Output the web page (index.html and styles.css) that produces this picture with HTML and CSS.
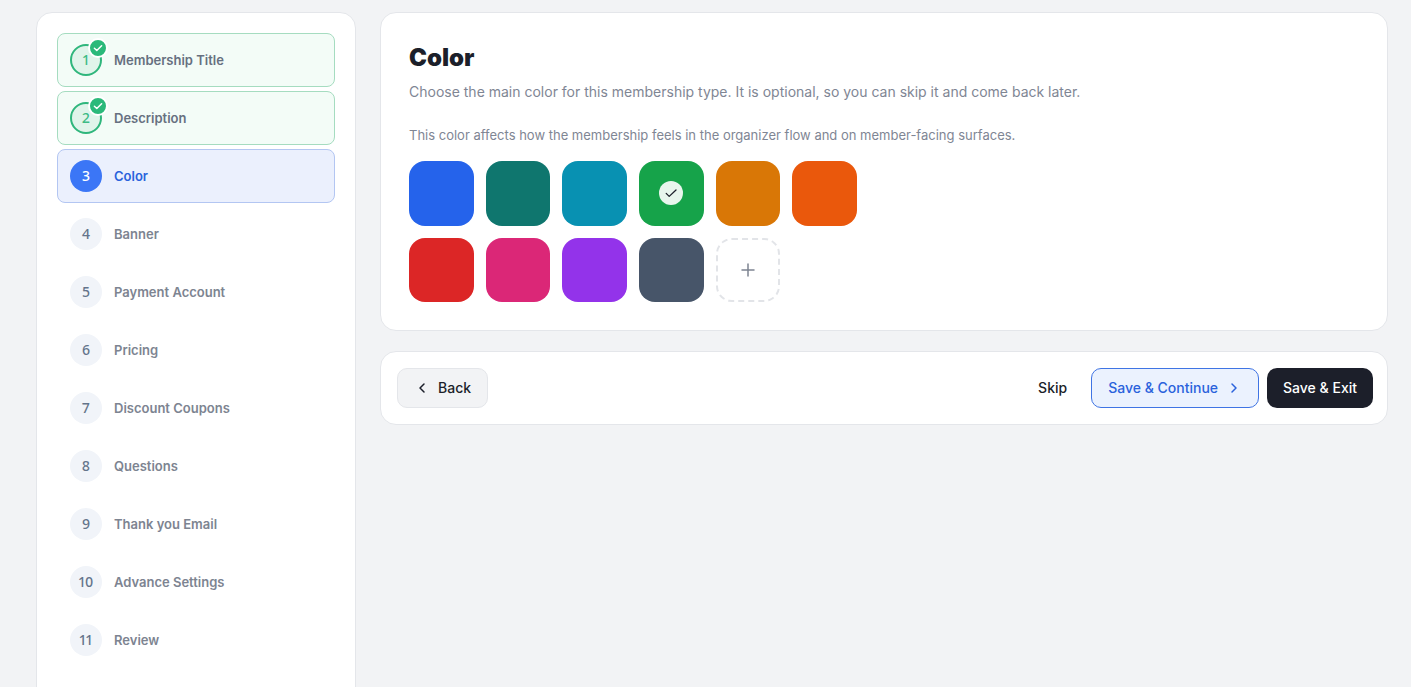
FILE: index.html
```html
<!DOCTYPE html>
<html lang="en">
<head>
  <meta charset="UTF-8">
  <meta name="viewport" content="width=device-width, initial-scale=1.0">
  <title>Membership Color</title>
  <link rel="stylesheet" href="styles.css">
</head>
<body>
  <div class="layout">
    <nav class="sidebar" aria-label="Steps">
      <ol class="steps">
        <li><a href="#title" class="step done">
          <span class="step-number">1
            <svg class="step-check" viewBox="0 0 20 20"><circle cx="10" cy="10" r="9"/><path d="M6.4 10.3l2.4 2.2 4.8-4.8"/></svg>
          </span>
          <span class="step-label">Membership Title</span>
        </a></li>
        <li><a href="#description" class="step done">
          <span class="step-number">2
            <svg class="step-check" viewBox="0 0 20 20"><circle cx="10" cy="10" r="9"/><path d="M6.4 10.3l2.4 2.2 4.8-4.8"/></svg>
          </span>
          <span class="step-label">Description</span>
        </a></li>
        <li><a href="#color" class="step current" aria-current="step"><span class="step-number">3</span><span class="step-label">Color</span></a></li>
        <li><a href="#banner" class="step"><span class="step-number">4</span><span class="step-label">Banner</span></a></li>
        <li><a href="#payment" class="step"><span class="step-number">5</span><span class="step-label">Payment Account</span></a></li>
        <li><a href="#pricing" class="step"><span class="step-number">6</span><span class="step-label">Pricing</span></a></li>
        <li><a href="#coupons" class="step"><span class="step-number">7</span><span class="step-label">Discount Coupons</span></a></li>
        <li><a href="#questions" class="step"><span class="step-number">8</span><span class="step-label">Questions</span></a></li>
        <li><a href="#email" class="step"><span class="step-number">9</span><span class="step-label">Thank you Email</span></a></li>
        <li><a href="#settings" class="step"><span class="step-number">10</span><span class="step-label">Advance Settings</span></a></li>
        <li><a href="#review" class="step"><span class="step-number">11</span><span class="step-label">Review</span></a></li>
      </ol>
    </nav>

    <main class="content">
      <section class="card color-card">
        <h1>Color</h1>
        <p class="lead">Choose the main color for this membership type. It is optional, so you can skip it and come back later.</p>
        <p class="hint">This color affects how the membership feels in the organizer flow and on member-facing surfaces.</p>
        <div class="swatches">
          <button type="button" class="swatch blue" aria-label="Blue"></button>
          <button type="button" class="swatch teal" aria-label="Teal"></button>
          <button type="button" class="swatch cyan" aria-label="Cyan"></button>
          <button type="button" class="swatch green" aria-label="Green" aria-pressed="true">
            <span class="selected">
              <svg viewBox="0 0 16 16" width="16" height="16"><path d="M3.2 8.4l3 3 6.8-6.4"/></svg>
            </span>
          </button>
          <button type="button" class="swatch amber" aria-label="Amber"></button>
          <button type="button" class="swatch orange" aria-label="Orange"></button>
          <button type="button" class="swatch red" aria-label="Red"></button>
          <button type="button" class="swatch pink" aria-label="Pink"></button>
          <button type="button" class="swatch purple" aria-label="Purple"></button>
          <button type="button" class="swatch slate" aria-label="Slate"></button>
          <button type="button" class="swatch custom" aria-label="Custom color">
            <svg viewBox="0 0 20 20" width="20" height="20"><path d="M10 4v12M4 10h12"/></svg>
          </button>
        </div>
      </section>

      <div class="card actions">
        <button type="button" class="btn btn-back">
          <svg viewBox="0 0 16 16" width="16" height="16"><path d="M10 4L6 8l4 4"/></svg>
          Back
        </button>
        <div class="actions-right">
          <button type="button" class="btn btn-skip">Skip</button>
          <button type="button" class="btn btn-continue">
            Save &amp; Continue
            <svg viewBox="0 0 16 16" width="16" height="16"><path d="M6 4l4 4-4 4"/></svg>
          </button>
          <button type="button" class="btn btn-exit">Save &amp; Exit</button>
        </div>
      </div>
    </main>
  </div>
</body>
</html>
```
FILE: styles.css
```css
* {
  margin: 0;
  padding: 0;
  box-sizing: border-box;
}
body {
  font-family: Inter, "Liberation Sans", sans-serif;
  background-color: #f2f3f5;
  color: #1c1f2a;
}
button {
  font: inherit;
  cursor: pointer;
}
svg {
  fill: none;
  stroke: currentColor;
  stroke-linecap: round;
  stroke-linejoin: round;
}
.layout {
  display: flex;
  gap: 24px;
  height: 100vh;
  padding: 12px 23px 0 36px;
  overflow: hidden;
}

/* sidebar */
.sidebar {
  flex: 0 0 320px;
  align-self: flex-start;
  padding: 20px 20px 48px;
  background: #fff;
  border: 1px solid #e4e6ea;
  border-radius: 16px;
}
.steps {
  display: flex;
  flex-direction: column;
  gap: 4px;
  list-style: none;
}
.step {
  display: flex;
  align-items: center;
  gap: 12px;
  height: 54px;
  padding: 0 12px;
  border: 1px solid transparent;
  border-radius: 8px;
  color: #7d8491;
  font-size: 13px;
  line-height: 18px;
  font-weight: 600;
  text-decoration: none;
}
.step-label {
  padding-bottom: 1px;
}
.step-number {
  position: relative;
  display: flex;
  align-items: center;
  justify-content: center;
  width: 32px;
  height: 32px;
  border-radius: 50%;
  background: #f1f4f9;
  color: #64748b;
  font-family: "Noto Sans", sans-serif;
  font-size: 14px;
  font-weight: 500;
  font-variant-numeric: proportional-nums;
}
.step-check {
  position: absolute;
  top: -8px;
  right: -8px;
  width: 20px;
  height: 20px;
  stroke: #fff;
  stroke-width: 2;
}
.step-check circle {
  fill: #2bb97a;
}
.step-check path {
  stroke-width: 1.5;
}
.done {
  background: #f3fcf7;
  border-color: #a5dcc0;
  color: #667080;
}
.done .step-number {
  background: #e0f4ea;
  border: 2px solid #2fb67c;
  color: #3dbb84;
}
.current {
  background: #ebf0fd;
  border-color: #b3c6f2;
  color: #2a62dc;
}
.current .step-number {
  background: #3b76f6;
  color: #fff;
}

/* content */
.content {
  flex: 1;
  min-width: 0;
  display: flex;
  flex-direction: column;
  gap: 20px;
}
.card {
  background: #fff;
  border: 1px solid #e4e6ea;
  border-radius: 16px;
}
.color-card {
  padding: 28px;
}
.color-card h1 {
  font-size: 24px;
  line-height: 34px;
  font-weight: 900;
}
.lead {
  margin-top: 6px;
  font-size: 14px;
  line-height: 22px;
  color: #7f8694;
}
.hint {
  margin: 22px 0 16px;
  font-size: 13px;
  line-height: 20px;
  color: #7f8694;
}
.swatches {
  display: grid;
  grid-template-columns: repeat(6, 1fr);
  gap: 12px;
  max-width: 448px;
}
.swatch {
  display: flex;
  align-items: center;
  justify-content: center;
  aspect-ratio: 1;
  border: none;
  border-radius: 16px;
}
.blue { background: #2563eb; }
.teal { background: #0f766e; }
.cyan { background: #0891b2; }
.green { background: #16a34a; }
.amber { background: #d97706; }
.orange { background: #ea580c; }
.red { background: #dc2626; }
.pink { background: #db2777; }
.purple { background: #9333ea; }
.slate { background: #475569; }
.custom {
  background: #fff;
  border: 2px dashed #e2e4e8;
  color: #7d8491;
}
.custom svg {
  stroke-width: 1.5;
}
.selected {
  display: flex;
  align-items: center;
  justify-content: center;
  width: 24px;
  height: 24px;
  border-radius: 50%;
  background: #e8f6ed;
  color: #1c1f2a;
}
.selected svg {
  stroke-width: 1.3;
}

/* actions */
.actions {
  display: flex;
  align-items: center;
  justify-content: space-between;
  padding: 16px 14px 16px 16px;
}
.actions-right {
  display: flex;
  gap: 8px;
}
.btn {
  display: flex;
  align-items: center;
  gap: 8px;
  height: 40px;
  padding: 0 16px;
  border: none;
  border-radius: 10px;
  background: none;
  color: #1c1f2a;
  font-size: 14px;
  line-height: 20px;
  font-weight: 500;
}
.btn svg {
  stroke-width: 1.5;
}
.btn-back {
  background: #f2f3f5;
  border: 1px solid #e4e6ea;
}
.btn-continue {
  background: #ebf2fe;
  border: 1px solid #3f74e4;
  color: #2a62dc;
}
.btn-exit {
  background: #1c1f2a;
  color: #fff;
}
```
